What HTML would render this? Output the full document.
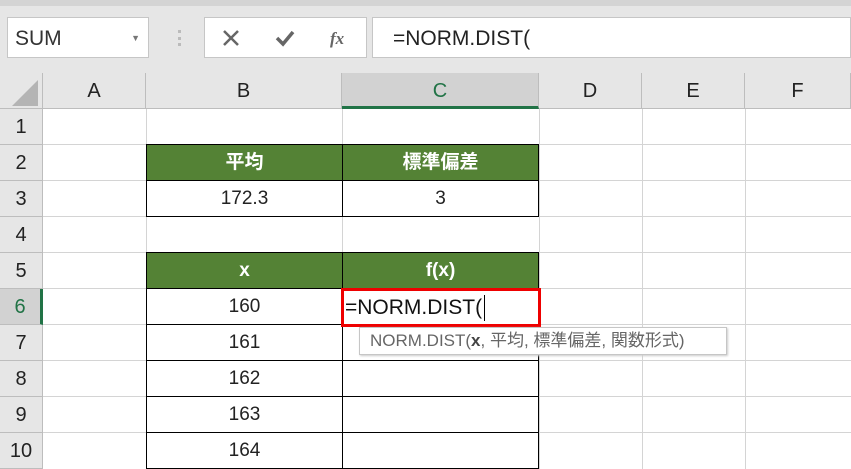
<!DOCTYPE html><html><head><style>
body{margin:0;width:851px;height:469px;overflow:hidden;background:#fff;font-family:"Liberation Sans","Noto Sans CJK JP",sans-serif;position:relative}
div{position:absolute;box-sizing:border-box}
.top{left:0;top:0;width:851px;height:73px;background:#e6e6e6;border-top:6px solid #d4d4d4}
.box{background:#fff;border:1px solid #c6c6c6}
.ch{top:73px;height:36px;background:#e6e6e6;border-right:1px solid #bdbdbd;border-bottom:1px solid #bdbdbd;text-align:center;line-height:36px;font-size:20px;color:#222}
.rh{left:0;width:43px;height:36px;background:#e6e6e6;border-right:1px solid #bdbdbd;border-bottom:1px solid #bdbdbd;text-align:center;line-height:36px;font-size:20px;color:#222}
.vl{top:109px;width:1px;height:360px;background:#d4d4d4}
.hl{left:43px;width:808px;height:1px;background:#d4d4d4}
.c{height:37px;width:197px;border:1px solid #000;text-align:center;line-height:35px;font-size:19px;color:#222}
.g{background:#548235;color:#fff;font-weight:bold}
</style></head><body>
<div class="top"></div>
<div class="box" style="left:7px;top:17px;width:142px;height:41px;font-size:21px;line-height:42px;padding-left:7px;color:#333">SUM<span style="position:absolute;right:8px;top:0;font-size:9px;color:#777;line-height:40px">▼</span></div>
<div style="left:178px;top:30px;width:3px;height:16px;border-left:3px dotted #bbb"></div>
<div class="box" style="left:204px;top:17px;width:163px;height:41px"></div>
<svg style="position:absolute;left:222px;top:28px" width="130" height="20"><path d="M2 3L16 17M16 3L2 17" stroke="#666" stroke-width="2.5"/><path d="M55 10L61 16L71 4" stroke="#666" stroke-width="3.5" fill="none"/><text x="108" y="16" font-family="Liberation Serif" font-style="italic" font-weight="bold" font-size="17" fill="#666">fx</text></svg>
<div class="box" style="left:372px;top:17px;width:479px;height:41px;font-size:21px;line-height:42px;padding-left:20px;color:#222">=NORM.DIST(</div>
<div style="left:0;top:73px;width:43px;height:36px;background:#e6e6e6;border-right:1px solid #bdbdbd;border-bottom:1px solid #bdbdbd"></div>
<svg style="position:absolute;left:10px;top:78px" width="30" height="30"><path d="M28 2L28 28L2 28Z" fill="#b4b4b4"/></svg>
<div class="ch" style="left:43px;width:103px">A</div>
<div class="ch" style="left:146px;width:196px">B</div>
<div class="ch" style="left:342px;width:197px;background:#d2d2d2;color:#217346;border-bottom:3px solid #217346">C</div>
<div class="ch" style="left:539px;width:103px">D</div>
<div class="ch" style="left:642px;width:103px">E</div>
<div class="ch" style="left:745px;width:106px">F</div>
<div class="vl" style="left:146px"></div><div class="vl" style="left:342px"></div><div class="vl" style="left:539px"></div><div class="vl" style="left:642px"></div><div class="vl" style="left:745px"></div>
<div class="hl" style="top:144px"></div><div class="hl" style="top:180px"></div><div class="hl" style="top:216px"></div><div class="hl" style="top:252px"></div><div class="hl" style="top:288px"></div><div class="hl" style="top:324px"></div><div class="hl" style="top:360px"></div><div class="hl" style="top:396px"></div><div class="hl" style="top:432px"></div>
<div class="rh" style="top:109px">1</div><div class="rh" style="top:145px">2</div><div class="rh" style="top:181px">3</div><div class="rh" style="top:217px">4</div><div class="rh" style="top:253px">5</div>
<div class="rh" style="top:289px;background:#d2d2d2;color:#217346;border-right:3px solid #217346">6</div>
<div class="rh" style="top:325px">7</div><div class="rh" style="top:361px">8</div><div class="rh" style="top:397px">9</div><div class="rh" style="top:433px">10</div>
<div class="c g" style="left:146px;top:144px">平均</div><div class="c g" style="left:342px;top:144px">標準偏差</div>
<div class="c" style="left:146px;top:180px">172.3</div><div class="c" style="left:342px;top:180px">3</div>
<div class="c g" style="left:146px;top:252px">x</div><div class="c g" style="left:342px;top:252px">f(x)</div>
<div class="c" style="left:146px;top:288px">160</div><div class="c" style="left:342px;top:288px"></div>
<div class="c" style="left:146px;top:324px">161</div><div class="c" style="left:342px;top:324px"></div>
<div class="c" style="left:146px;top:360px">162</div><div class="c" style="left:342px;top:360px"></div>
<div class="c" style="left:146px;top:396px">163</div><div class="c" style="left:342px;top:396px"></div>
<div class="c" style="left:146px;top:432px">164</div><div class="c" style="left:342px;top:432px"></div>
<div style="left:341px;top:288px;width:200px;height:39px;border:3px solid #e00;background:#fff;font-size:21px;line-height:33px;padding-left:1px;color:#111;white-space:nowrap">=NORM.DIST(<span style="display:inline-block;width:1px;height:26px;background:#000;vertical-align:middle;margin-left:2px"></span></div>
<div style="left:359px;top:327px;width:368px;height:28px;background:#fff;border:1px solid #c6c6c6;box-shadow:1px 1px 2px #ccc;font-size:17px;line-height:26px;padding-left:10px;color:#666;white-space:nowrap">NORM.DIST(<b style="color:#444">x</b>, 平均, 標準偏差, 関数形式)</div>
</body></html>
